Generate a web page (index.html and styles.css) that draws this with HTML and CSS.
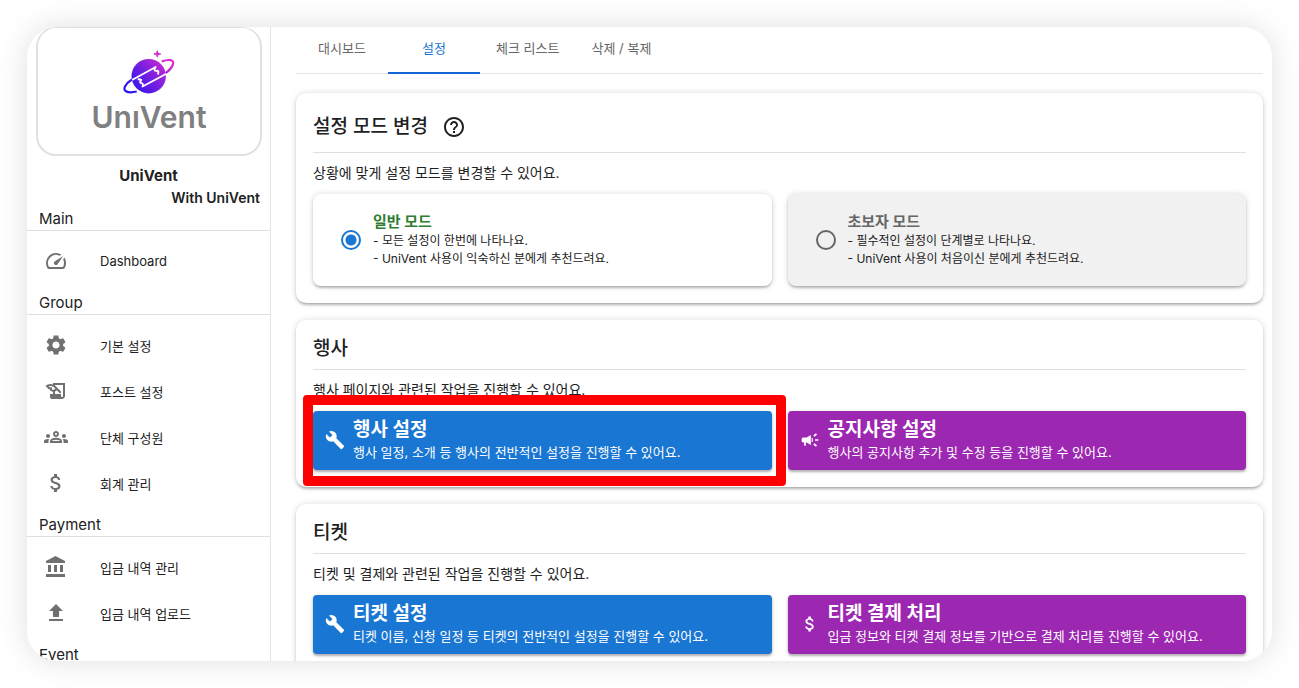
FILE: index.html
```
<!DOCTYPE html>
<html lang="ko">
	<head>
		<meta charset="utf-8">
		<meta name="viewport" content="width=device-width, initial-scale=1">
		<title>UniVent - 설정</title>
		<link rel="stylesheet" href="styles.css">
	</head>
	<body>
		<div class="window">
			<aside class="sidebar">
				<div class="logo">
					<svg class="planet" viewBox="0 0 54 48" aria-hidden="true">
						<defs>
							<linearGradient id="space" gradientUnits="userSpaceOnUse" x1="8" y1="42" x2="46" y2="8">
								<stop offset="0" stop-color="#2a14f0"/>
								<stop offset="0.5" stop-color="#7a1fe0"/>
								<stop offset="1" stop-color="#e62bd0"/>
							</linearGradient>
						</defs>
						<circle cx="26.7" cy="27.2" r="17.2" fill="url(#space)"/>
						<path d="M4 38C4 35 7 32.500 10 31L33.700 18C31.500 21.500 33 22.300 34.500 21.800C36.500 21.500 37.200 23 35.700 25.500M49 17C48 20 46 22.500 43 25.500L20.500 37.500C21.500 35 20.500 34 18.800 34C17.500 33.800 18.500 31.500 19.300 31C18 30 17 30.200 15.700 30.300" fill="none" stroke="#fff" stroke-width="1.800" stroke-linejoin="round"/>
						<path d="M14.700 42.500C6 44.500 0.500 42.500 3 37.500C4.500 34.500 7 32.300 10 30.500M39.700 12.500C46 10 53 10.500 50.900 15.500C49.700 18.800 47 21.800 43.500 24.200" fill="none" stroke="url(#space)" stroke-width="2.200"/>
						<path d="M35.300 1.800C35.700 4.200 36.200 4.600 38.700 5C36.200 5.400 35.700 5.900 35.300 8.200C34.900 5.900 34.400 5.400 31.900 5C34.400 4.600 34.900 4.200 35.300 1.800Z" fill="#d42bd4" stroke="#d42bd4" stroke-width="1"/>
					</svg>
					<span class="wordmark">UnıVent</span>
				</div>
				<p class="group-name">UniVent</p>
				<p class="group-with">With UniVent</p>

				<h2 class="menu-title">Main</h2>
				<nav class="menu">
					<a href="#"><svg viewBox="0 0 24 24"><path d="M20.380 8.570l-1.230 1.850a8 8 0 0 1-.22 7.580H5.070A8 8 0 0 1 15.580 6.850l1.850-1.230A10 10 0 0 0 3.350 19a2 2 0 0 0 1.720 1h13.850a2 2 0 0 0 1.740-1 10 10 0 0 0-.27-10.440zm-9.790 6.840a2 2 0 0 0 2.830 0l5.660-8.490-8.490 5.660a2 2 0 0 0 0 2.830z"/></svg>Dashboard</a>
				</nav>

				<h2 class="menu-title">Group</h2>
				<nav class="menu">
					<a href="#"><svg viewBox="0 0 24 24"><path d="M19.140 12.940c.04-.3.060-.61.060-.94 0-.32-.02-.64-.07-.94l2.030-1.580c.18-.14.23-.41.12-.61l-1.920-3.320c-.12-.22-.37-.29-.59-.22l-2.390.96c-.5-.38-1.030-.7-1.620-.94l-.36-2.540c-.04-.24-.24-.41-.48-.41h-3.840c-.24 0-.43.17-.47.41l-.36 2.540c-.59.24-1.130.57-1.620.94l-2.390-.96c-.22-.08-.47 0-.59.22L2.740 8.870c-.12.21-.08.47.12.61l2.030 1.580c-.05.3-.09.63-.09.94s.02.64.07.94l-2.030 1.580c-.18.14-.23.41-.12.61l1.920 3.320c.12.22.37.29.59.22l2.390-.96c.5.38 1.030.7 1.620.94l.36 2.540c.05.24.24.41.48.41h3.840c.24 0 .44-.17.47-.41l.36-2.540c.59-.24 1.130-.56 1.620-.94l2.390.96c.22.08.47 0 .59-.22l1.920-3.320c.12-.22.07-.47-.12-.61l-2.010-1.580zM12 15.600c-1.980 0-3.600-1.620-3.600-3.600s1.620-3.600 3.600-3.600 3.600 1.620 3.600 3.600-1.620 3.600-3.600 3.600z"/></svg>기본 설정</a>
					<a href="#"><svg viewBox="0 0 24 24"><path d="M9 4v1.380c-.83-.33-1.720-.5-2.610-.5-1.790 0-3.580.68-4.950 2.050l3.330 3.330h1.110v1.110c.86.86 1.980 1.310 3.110 1.360V15H6v3c0 1.100.9 2 2 2h10c1.660 0 3-1.340 3-3V4H9zm-1.110 6.410V8.260H5.610L4.570 7.220a5.070 5.070 0 0 1 1.820-.34c1.340 0 2.590.52 3.540 1.460l1.410 1.410-.2.2c-.51.51-1.190.8-1.920.8-.47 0-.93-.12-1.330-.34zM19 17c0 .55-.45 1-1 1s-1-.45-1-1v-2h-6v-2.590c.57-.23 1.100-.57 1.560-1.030l.2-.2L15.590 14H17v-1.410l-6-5.970V6h8v11z"/></svg>포스트 설정</a>
					<a href="#"><svg viewBox="0 0 24 24"><path d="M4 13c1.100 0 2-.9 2-2s-.9-2-2-2-2 .9-2 2 .9 2 2 2zm1.130 1.100c-.37-.06-.74-.1-1.130-.1-.99 0-1.930.21-2.780.58C.48 14.900 0 15.620 0 16.430V18h4.500v-1.610c0-.83.23-1.610.63-2.290zM20 13c1.100 0 2-.9 2-2s-.9-2-2-2-2 .9-2 2 .9 2 2 2zm4 3.430c0-.81-.48-1.530-1.220-1.850-.85-.37-1.790-.58-2.780-.58-.39 0-.76.04-1.130.1.4.68.63 1.460.63 2.290V18H24v-1.570zm-7.760-2.780c-1.170-.52-2.610-.9-4.240-.9-1.630 0-3.070.39-4.240.9C6.680 14.130 6 15.210 6 16.390V18h12v-1.610c0-1.180-.68-2.260-1.760-2.740zM8.070 16c.09-.23.13-.39.91-.69.97-.38 1.990-.56 3.020-.56s2.050.18 3.020.56c.77.3.81.46.91.69H8.070zM12 8c.55 0 1 .45 1 1s-.45 1-1 1-1-.45-1-1 .45-1 1-1m0-2c-1.660 0-3 1.340-3 3s1.340 3 3 3 3-1.340 3-3-1.340-3-3-3z"/></svg>단체 구성원</a>
					<a href="#"><svg viewBox="0 0 24 24"><path d="M11.800 10.900c-2.270-.59-3-1.200-3-2.150 0-1.090 1.010-1.850 2.700-1.850 1.780 0 2.440.85 2.500 2.100h2.210c-.07-1.720-1.120-3.300-3.210-3.810V3h-3v2.160c-1.940.42-3.500 1.680-3.500 3.610 0 2.310 1.910 3.460 4.700 4.130 2.500.6 3 1.480 3 2.410 0 .69-.49 1.790-2.700 1.790-2.060 0-2.870-.92-2.980-2.100h-2.200c.12 2.190 1.760 3.420 3.680 3.830V21h3v-2.150c1.950-.37 3.500-1.500 3.500-3.550 0-2.840-2.430-3.810-4.700-4.400z"/></svg>회계 관리</a>
				</nav>

				<h2 class="menu-title">Payment</h2>
				<nav class="menu">
					<a href="#"><svg viewBox="0 0 24 24"><path d="M4 10v7h3v-7H4zm6 0v7h3v-7h-3zM2 22h19v-3H2v3zm14-12v7h3v-7h-3zm-4.500-9L2 6v2h19V6l-9.500-5z"/></svg>입금 내역 관리</a>
					<a href="#"><svg viewBox="0 0 24 24"><path d="M5 20h14v-2H5v2zM5 10h4v6h6v-6h4l-7-7-7 7z"/></svg>입금 내역 업로드</a>
				</nav>

				<h2 class="menu-title">Event</h2>
			</aside>

			<main class="content">
				<div class="tabs" role="tablist">
					<button type="button" role="tab">대시보드</button>
					<button type="button" role="tab" class="active" aria-selected="true">설정</button>
					<button type="button" role="tab">체크 리스트</button>
					<button type="button" role="tab">삭제 / 복제</button>
				</div>

				<section class="card">
					<div class="card-title">
						<h1>설정 모드 변경</h1>
						<button type="button" class="help" aria-label="도움말"><svg viewBox="0 0 24 24"><path d="M11 18h2v-2h-2v2zm1-16C6.480 2 2 6.480 2 12s4.480 10 10 10 10-4.480 10-10S17.520 2 12 2zm0 18c-4.410 0-8-3.590-8-8s3.590-8 8-8 8 3.590 8 8-3.590 8-8 8zm0-14c-2.210 0-4 1.790-4 4h2c0-1.100.9-2 2-2s2 .9 2 2c0 2-3 1.750-3 5h2c0-2.250 3-2.500 3-5 0-2.210-1.790-4-4-4z"/></svg></button>
					</div>
					<p class="card-desc">상황에 맞게 설정 모드를 변경할 수 있어요.</p>
					<div class="row">
						<label class="mode">
							<input type="radio" name="mode" checked>
							<span class="mode-text">
								<strong>일반 모드</strong>
								<span>- 모든 설정이 한번에 나타나요.</span>
								<span>- UniVent 사용이 익숙하신 분에게 추천드려요.</span>
							</span>
						</label>
						<label class="mode">
							<input type="radio" name="mode">
							<span class="mode-text">
								<strong>초보자 모드</strong>
								<span>- 필수적인 설정이 단계별로 나타나요.</span>
								<span>- UniVent 사용이 처음이신 분에게 추천드려요.</span>
							</span>
						</label>
					</div>
				</section>

				<section class="card">
					<div class="card-title">
						<h1>행사</h1>
					</div>
					<p class="card-desc">행사 페이지와 관련된 작업을 진행할 수 있어요.</p>
					<div class="row">
						<button type="button" class="action blue marked">
							<svg viewBox="0 0 24 24"><path d="M22.700 19l-9.100-9.100c.9-2.300.4-5-1.500-6.900-2-2-5-2.400-7.400-1.300L9 6 6 9 1.600 4.700C.4 7.100.9 10.100 2.900 12.100c1.900 1.900 4.600 2.400 6.900 1.500l9.100 9.100c.4.4 1 .4 1.400 0l2.300-2.300c.5-.4.5-1.100.1-1.400z"/></svg>
							<span class="action-text">
								<strong>행사 설정</strong>
								<span>행사 일정, 소개 등 행사의 전반적인 설정을 진행할 수 있어요.</span>
							</span>
						</button>
						<button type="button" class="action purple">
							<svg viewBox="0 0 24 24"><path d="M18 11v2h4v-2h-4zm-2 6.610c.96.71 2.210 1.650 3.200 2.390.4-.53.8-1.070 1.200-1.600-.99-.74-2.240-1.680-3.200-2.400-.4.54-.8 1.080-1.200 1.610zM20.400 5.600c-.4-.53-.8-1.070-1.200-1.600-.99.74-2.240 1.680-3.200 2.400.4.53.8 1.070 1.200 1.600.96-.72 2.210-1.650 3.200-2.400zM4 9c-1.100 0-2 .9-2 2v2c0 1.100.9 2 2 2h1v4h2v-4h1l5 3V6L8 9H4zm11.500 3c0-1.330-.58-2.530-1.500-3.350v6.690c.92-.81 1.500-2.010 1.500-3.340z"/></svg>
							<span class="action-text">
								<strong>공지사항 설정</strong>
								<span>행사의 공지사항 추가 및 수정 등을 진행할 수 있어요.</span>
							</span>
						</button>
					</div>
				</section>

				<section class="card">
					<div class="card-title">
						<h1>티켓</h1>
					</div>
					<p class="card-desc">티켓 및 결제와 관련된 작업을 진행할 수 있어요.</p>
					<div class="row">
						<button type="button" class="action blue">
							<svg viewBox="0 0 24 24"><path d="M22.700 19l-9.100-9.100c.9-2.300.4-5-1.500-6.900-2-2-5-2.400-7.400-1.300L9 6 6 9 1.600 4.700C.4 7.100.9 10.100 2.900 12.100c1.900 1.900 4.600 2.400 6.900 1.500l9.100 9.100c.4.4 1 .4 1.400 0l2.300-2.300c.5-.4.5-1.100.1-1.400z"/></svg>
							<span class="action-text">
								<strong>티켓 설정</strong>
								<span>티켓 이름, 신청 일정 등 티켓의 전반적인 설정을 진행할 수 있어요.</span>
							</span>
						</button>
						<button type="button" class="action purple">
							<svg viewBox="0 0 24 24"><path d="M11.800 10.900c-2.270-.59-3-1.200-3-2.150 0-1.090 1.010-1.850 2.700-1.850 1.780 0 2.440.85 2.500 2.100h2.210c-.07-1.720-1.120-3.300-3.210-3.810V3h-3v2.160c-1.940.42-3.500 1.680-3.500 3.610 0 2.310 1.910 3.460 4.700 4.130 2.500.6 3 1.480 3 2.410 0 .69-.49 1.790-2.700 1.790-2.060 0-2.870-.92-2.980-2.100h-2.200c.12 2.190 1.760 3.420 3.680 3.830V21h3v-2.150c1.950-.37 3.500-1.500 3.500-3.550 0-2.840-2.430-3.810-4.700-4.400z"/></svg>
							<span class="action-text">
								<strong>티켓 결제 처리</strong>
								<span>입금 정보와 티켓 결제 정보를 기반으로 결제 처리를 진행할 수 있어요.</span>
							</span>
						</button>
					</div>
				</section>
			</main>
		</div>
	</body>
</html>
```
FILE: styles.css
```
* {
	box-sizing: border-box;
}
body {
	margin: 0;
	padding: 27px;
	height: 100vh;
	background-color: #fff;
	color: #212121;
	font-family: Inter, "Noto Sans CJK KR", sans-serif;
	font-size: 13px;
}
h1, h2, p {
	margin: 0;
}
button {
	font-family: inherit;
	border: none;
	background: none;
	padding: 0;
	cursor: pointer;
}
svg {
	fill: currentColor;
	flex-shrink: 0;
}

.window {
	display: flex;
	height: 100%;
	overflow: hidden;
	border-radius: 30px;
	box-shadow: 0 0 30px rgba(0, 0, 0, 0.13);
	background-color: #fff;
}

/* sidebar */
.sidebar {
	flex: 0 0 244px;
	border-right: 1px solid #e3e3e3;
}
.logo {
	display: flex;
	flex-direction: column;
	align-items: center;
	height: 129px;
	margin: 0 8px 8px 9px;
	padding-top: 21px;
	border: 2px solid #e0e0e0;
	border-top-width: 1px;
	border-radius: 20px;
}
.planet {
	width: 54px;
	height: 48px;
	fill: none;
}
.wordmark {
	color: #808080;
	font-size: 30px;
	font-weight: 600;
	line-height: 40px;
}
.group-name {
	text-align: center;
	font-size: 15px;
	font-weight: 700;
	line-height: 24px;
}
.group-with {
	padding: 0 10px 2px 0;
	text-align: right;
	font-size: 14px;
	font-weight: 600;
	line-height: 19px;
}
.menu-title {
	padding: 0 0 1px 12px;
	border-bottom: 1px solid #e0e0e0;
	font-size: 15px;
	font-weight: 400;
	line-height: 20px;
}
.menu {
	padding: 8px 0;
}
.menu a {
	display: flex;
	align-items: center;
	gap: 32px;
	height: 46px;
	padding: 0 0 2px 17px;
	color: #212121;
	text-decoration: none;
}
.menu svg {
	width: 24px;
	height: 24px;
	color: #707070;
}

/* content */
.content {
	flex: 1;
	min-width: 0;
	padding: 0 9px 0 25px;
}
.tabs {
	display: flex;
	height: 47px;
	margin-bottom: 19px;
	border-bottom: 1px solid #e4e4e4;
}
.tabs button {
	min-width: 92px;
	height: 47px;
	padding: 0 16px 4px;
	border-bottom: 2px solid transparent;
	color: #666;
	font-size: 13px;
}
.tabs .active {
	border-bottom-color: #1266d8;
	color: #1976d2;
}
.card {
	margin-bottom: 17px;
	padding: 17px;
	border-radius: 10px;
	background-color: #fff;
	box-shadow: 0 3px 3px -2px rgba(0, 0, 0, 0.2), 0 2px 3px rgba(0, 0, 0, 0.14), 0 0 6px rgba(0, 0, 0, 0.14);
}
.card-title {
	display: flex;
	align-items: center;
	gap: 10px;
	padding-bottom: 8px;
	border-bottom: 1px solid #e0e0e0;
}
.card-title h1 {
	font-size: 19px;
	font-weight: 500;
	line-height: 24px;
}
.help {
	height: 34px;
	padding: 4px;
	color: #212121;
}
.help svg {
	display: block;
	width: 24px;
	height: 24px;
}
.card-desc {
	padding: 10px 0 11px;
	font-size: 14px;
	line-height: 20px;
}
.row {
	display: grid;
	grid-template-columns: 1fr 1fr;
	gap: 16px;
}

.mode {
	display: flex;
	align-items: center;
	gap: 12px;
	padding: 18px 28px;
	border-radius: 8px;
	background-color: #f1f1f1;
	box-shadow: 0 3px 3px -2px rgba(0, 0, 0, 0.2), 0 2px 3px rgba(0, 0, 0, 0.14), 0 0 6px rgba(0, 0, 0, 0.14);
}
.mode input {
	appearance: none;
	width: 20px;
	height: 20px;
	margin: 0;
	border: 2px solid #666;
	border-radius: 50%;
}
.mode input:checked {
	border-color: #1976d2;
	background: radial-gradient(circle, #1976d2 5px, transparent 6px);
}
.mode-text {
	display: flex;
	flex-direction: column;
	font-size: 12px;
	line-height: 18px;
}
.mode-text strong {
	color: #666;
	font-size: 15px;
	line-height: 20px;
}
.mode:has(input:checked) {
	background-color: #fff;
}
.mode:has(input:checked) strong {
	color: #2e7d32;
}

.action {
	display: flex;
	align-items: center;
	gap: 8px;
	padding: 7px 12px 8px;
	border-radius: 4px;
	color: #fff;
	text-align: left;
	box-shadow: 0 2px 2px rgba(0, 0, 0, 0.22), 0 1px 4px rgba(0, 0, 0, 0.16);
}
.action svg {
	width: 20px;
	height: 20px;
}
.blue {
	background-color: #1976d2;
}
.purple {
	background-color: #9c27b0;
}
.action-text {
	display: flex;
	flex-direction: column;
	font-size: 13px;
	line-height: 20px;
}
.action-text strong {
	font-size: 19px;
	line-height: 24px;
}

/* red frame round the highlighted button */
.marked {
	position: relative;
}
.marked::after {
	content: "";
	position: absolute;
	inset: -16px -14px -16px -10px;
	z-index: 1;
	border: 10px solid #f00;
	border-radius: 4px;
	pointer-events: none;
}
```
